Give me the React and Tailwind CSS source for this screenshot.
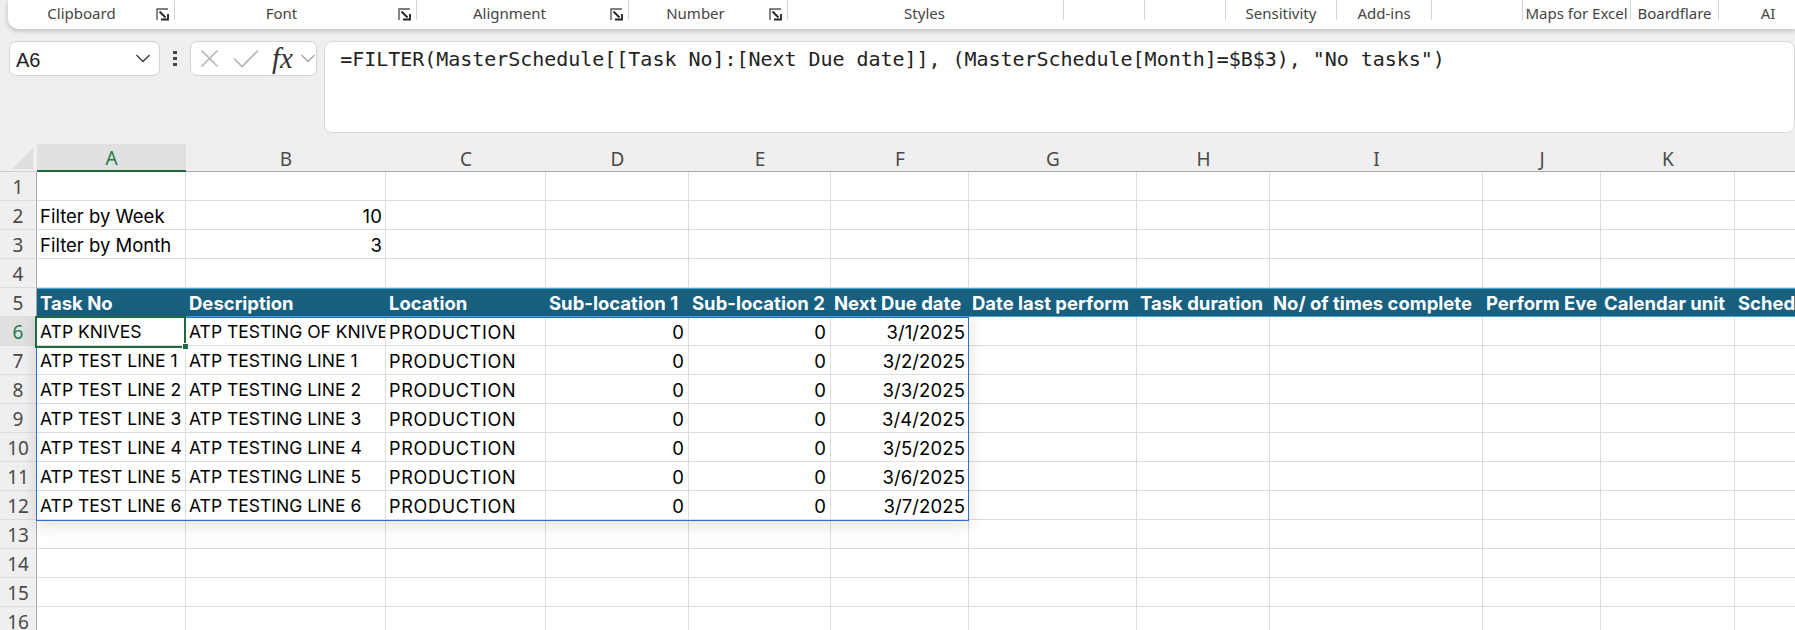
import React from "react";

const sections = [
  { label: "Clipboard", box: "w-[167px] pr-[19px]", launcher: true },
  { label: "Font", box: "w-[242px] pr-[28px]", launcher: true },
  { label: "Alignment", box: "w-[212px] pr-[26px]", launcher: true },
  { label: "Number", box: "w-[159px] pr-[25px]", launcher: true },
  { label: "Styles", box: "w-[276px] pr-[2px]" },
  { label: "", box: "w-[81px]" },
  { label: "", box: "w-[81px]" },
  { label: "Sensitivity", box: "w-[111px]" },
  { label: "Add-ins", box: "w-[95px]" },
  { label: "", box: "w-[91px]" },
  { label: "Maps for Excel", box: "w-[108px]" },
  { label: "Boardflare", box: "w-[88px]" },
  { label: "AI", box: "w-[98px] border-r-0" },
];

const letters = ["A", "B", "C", "D", "E", "F", "G", "H", "I", "J", "K", "L"];
const headers = [
  "Task No", "Description", "Location", "Sub-location 1", "Sub-location 2", "Next Due date",
  "Date last perform", "Task duration", "No/ of times complete", "Perform Eve", "Calendar unit", "Schedule",
];

const blank = (n) => Array.from({ length: n }, () => "");
const tableRow = (a, b, d) => [a, b, "PRODUCTION", "0", "0", d, ...blank(6)];

const rows = [
  blank(12),
  ["Filter by Week", "10", ...blank(10)],
  ["Filter by Month", "3", ...blank(10)],
  blank(12),
  headers,
  tableRow("ATP KNIVES", "ATP TESTING OF KNIVES", "3/1/2025"),
  tableRow("ATP TEST LINE 1", "ATP TESTING LINE 1", "3/2/2025"),
  tableRow("ATP TEST LINE 2", "ATP TESTING LINE 2", "3/3/2025"),
  tableRow("ATP TEST LINE 3", "ATP TESTING LINE 3", "3/4/2025"),
  tableRow("ATP TEST LINE 4", "ATP TESTING LINE 4", "3/5/2025"),
  tableRow("ATP TEST LINE 5", "ATP TESTING LINE 5", "3/6/2025"),
  tableRow("ATP TEST LINE 6", "ATP TESTING LINE 6", "3/7/2025"),
  blank(12),
  blank(12),
  blank(12),
  blank(12),
];

function cellText(t) {
  if (t === "0") return "justify-end pr-[4px] text-[18.5px]";
  if (/^[0-9/]+$/.test(t)) return "justify-end pr-[3px] text-[18.5px] tracking-[0.1px]";
  if (t === "PRODUCTION") return "pl-[3px] text-[18px] tracking-[0.7px]";
  if (t.startsWith("Filter")) return "pl-[3px] text-[18.5px]";
  return "pl-[3px] text-[17.5px]";
}

function Launcher() {
  return (
    <svg className="absolute right-[5px] top-[8px]" width="13" height="13" viewBox="0 0 13 13" fill="none" stroke="#222">
      <path d="M1 12V1h11" strokeWidth="1.4" stroke="#555" />
      <path d="M3.5 3.5l6 6" strokeWidth="1.8" />
      <path d="M5 11.5h7V6" strokeWidth="1.8" />
    </svg>
  );
}

function Chevron({ className, color }) {
  return (
    <svg className={className} width="16" height="9" viewBox="0 0 16 9" fill="none" stroke={color} strokeWidth="1.3">
      <path d="M1.5 1l6.5 6.5L14.5 1" />
    </svg>
  );
}

export default function App() {
  return (
    <div className="relative h-[630px] w-[1795px] overflow-hidden bg-[#efefef] font-['Noto_Sans',sans-serif]">
      {/* Ribbon */}
      <div className="ml-[8px] flex h-[29px] items-start rounded-bl-[10px] bg-white shadow-[0_2px_5px_rgba(0,0,0,0.22)]">
        {sections.map((s, i) => (
          <div
            key={i}
            className={`relative flex h-[20px] shrink-0 items-center justify-center border-r border-[#d4d4d4] pt-[7px] text-[15px] text-[#444] whitespace-nowrap ${s.box}`}
          >
            {s.label}
            {s.launcher && <Launcher />}
          </div>
        ))}
      </div>

      {/* Formula bar */}
      <div className="mt-[12px] flex h-[92px] items-start">
        <div className="ml-[9px] flex h-[35px] w-[152px] items-center justify-between rounded-[7px] border border-[#d3d3d3] bg-white pl-[6px] pr-[8px]">
          <span className="pt-[2px] font-['Liberation_Sans',sans-serif] text-[20px] text-[#222]">A6</span>
          <Chevron color="#333" />
        </div>
        <div className="flex h-[35px] w-[30px] flex-col items-center justify-center gap-[3px]">
          <span className="h-[3px] w-[4px] bg-[#444]" />
          <span className="h-[3px] w-[4px] bg-[#444]" />
          <span className="h-[3px] w-[4px] bg-[#444]" />
        </div>
        <div className="flex h-[35px] w-[128px] items-center rounded-[7px] border border-[#d3d3d3] bg-white pl-[9px]">
          <svg width="20" height="19" viewBox="0 0 20 19" fill="none" stroke="#b4b4b4" strokeWidth="1.6">
            <path d="M1.5 1.5l16 16M17.5 1.5l-16 16" />
          </svg>
          <svg className="ml-[13px]" width="26" height="19" viewBox="0 0 26 19" fill="none" stroke="#b4b4b4" strokeWidth="1.6">
            <path d="M1 9.5l8 8L25 1.5" />
          </svg>
          <span className="ml-[13px] font-['Liberation_Serif',serif] text-[29px] leading-none italic text-[#333]">fx</span>
          <Chevron className="ml-[7px]" color="#a0a0a0" />
        </div>
        <div className="ml-[7px] h-[92px] w-[1480px] rounded-[8px] border border-[#d8d8d8] bg-white pl-[15px] pt-[3px] font-['DejaVu_Sans_Mono',monospace] text-[20px] leading-[28px] tracking-[-0.035px] whitespace-pre text-[#222]">
          {'=FILTER(MasterSchedule[[Task No]:[Next Due date]], (MasterSchedule[Month]=$B$3), "No tasks")'}
        </div>
      </div>

      {/* Sheet */}
      <div className="relative mt-[11px] grid grid-cols-[37px_149px_200px_160px_143px_142px_138px_168px_133px_213px_118px_134px_200px] grid-rows-[28px_repeat(16,29px)]">
        {/* Corner */}
        <div className="relative border-b border-[#d0d0d0]">
          <svg className="absolute left-[12px] top-[4px]" width="21" height="21" viewBox="0 0 21 21">
            <path d="M21 0V21H0Z" fill="#dedede" />
          </svg>
        </div>
        {letters.map((l, i) => (
          <div
            key={l}
            className={
              i === 0
                ? "flex items-center justify-center border-b-2 border-[#1e6b40] bg-[#e0e0e0] pt-[3px] text-[19px] text-[#1f7a4c]"
                : "flex items-center justify-center border-b border-[#a8a8a8] pt-[4px] text-[19px] text-[#4a4a4a]"
            }
          >
            {l}
          </div>
        ))}

        {rows.map((row, r) => (
          <React.Fragment key={r}>
            <div
              className={`flex items-center justify-center border-r border-b border-r-[#a8a8a8] border-b-[#dcdcdc] pt-[3px] text-[19px] ${
                r === 5 ? "bg-[#e0e0e0] text-[#1f7a4c]" : "text-[#4a4a4a]"
              }`}
            >
              {r + 1}
            </div>
            {row.map((cell, c) =>
              r === 4 ? (
                <div
                  key={c}
                  className="flex items-center overflow-hidden border-t border-b border-t-[#44a5dc] border-b-[#44a5dc] bg-[#17607f] pl-[3px] pt-[3px] font-['Inter',sans-serif] text-[18.5px] font-bold whitespace-nowrap text-white"
                >
                  {cell}
                </div>
              ) : (
                <div
                  key={c}
                  className={`flex items-center overflow-hidden border-r border-b border-[#dcdcdc] bg-white pt-[3px] font-['Inter',sans-serif] whitespace-nowrap text-black ${cellText(cell)}`}
                >
                  {cell}
                </div>
              )
            )}
          </React.Fragment>
        ))}

        {/* Table range outline */}
        <div className="pointer-events-none absolute left-[36px] top-[173px] h-[204px] w-[933px] border border-[#2d6fca] shadow-[0_4px_16px_rgba(0,0,0,0.12)]" />
        {/* Active cell */}
        <div className="pointer-events-none absolute left-[35px] top-[172px] h-[32px] w-[151px] border-2 border-[#1e6b40]" />
        <div className="pointer-events-none absolute left-[182px] top-[199px] h-[7px] w-[7px] border border-white bg-[#1e6b40]" />
      </div>
    </div>
  );
}
